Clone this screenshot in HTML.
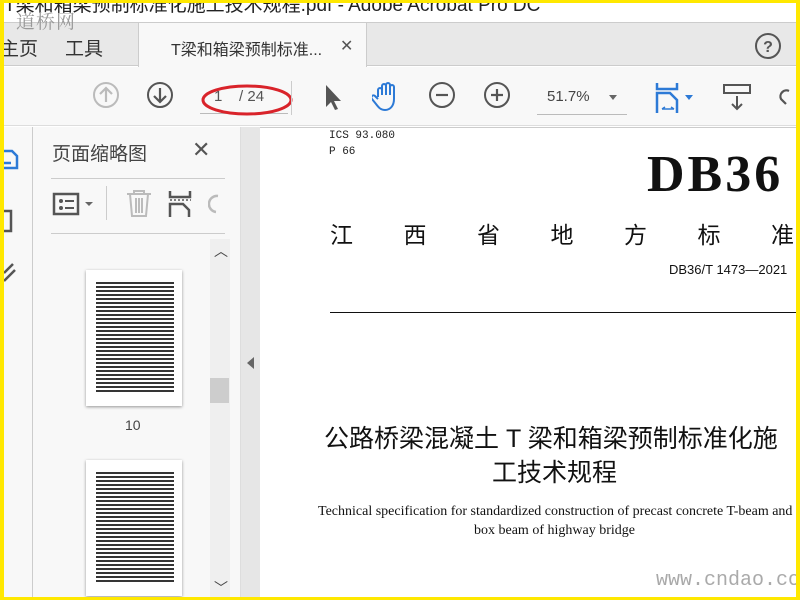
<!DOCTYPE html>
<html><head><meta charset="utf-8"><style>
*{margin:0;padding:0;box-sizing:border-box}
body{width:800px;height:600px;overflow:hidden;background:#ffe800;position:relative;font-family:"Liberation Sans","Noto Sans CJK SC",sans-serif}
.a{position:absolute}
.t{white-space:nowrap}
.lines{position:absolute;left:10px;right:8px;top:12px;bottom:12px;background:repeating-linear-gradient(#111 0 2px,#fff 2px 4px);opacity:.85}
</style></head><body>
<div class="a" style="left:4px;top:3px;width:792px;height:594px;background:#fff;overflow:hidden">
 <!-- title -->
 <div class="a t" style="left:0;top:-13px;font-size:19px;color:#222">T梁和箱梁预制标准化施工技术规程.pdf - Adobe Acrobat Pro DC</div>
 <!-- tabs -->
 <div class="a" style="left:0;top:19px;width:792px;height:44px;background:#e8e8e8;border-top:1px solid #ccc;border-bottom:1px solid #ccc"></div>
 <div class="a" style="left:134px;top:19px;width:229px;height:45px;background:#f8f8f8;border-left:1px solid #ccc;border-right:1px solid #ccc;border-top:1px solid #ccc"></div>
 <div class="a t" style="left:12px;top:4px;font-size:19px;color:#999;font-family:'Noto Serif CJK SC',serif;letter-spacing:1px;z-index:2">道桥网</div>
 <div class="a t" style="left:-4px;top:31px;font-size:19px;color:#333">主页</div>
 <div class="a t" style="left:61px;top:31px;font-size:19px;color:#333">工具</div>
 <div class="a t" style="left:167px;top:33px;font-size:16px;color:#333">T梁和箱梁预制标准...</div>
 <div class="a t" style="left:336px;top:33px;font-size:16px;color:#555">✕</div>
 <svg class="a" style="left:750px;top:29px" width="28" height="28"><circle cx="14" cy="14" r="12" fill="none" stroke="#555" stroke-width="2"/><text x="14" y="20" font-size="16" font-weight="bold" text-anchor="middle" fill="#555" font-family="Liberation Sans">?</text></svg>
 <!-- toolbar -->
 <div class="a" style="left:0;top:64px;width:792px;height:59px;background:#f8f8f8;border-bottom:1px solid #ddd"></div>
 <svg class="a" style="left:88px;top:78px" width="28" height="28"><circle cx="14" cy="14" r="12" fill="none" stroke="#bbb" stroke-width="2"/><path d="M14 21V7M8 13l6-6 6 6" fill="none" stroke="#bbb" stroke-width="2.2"/></svg>
 <svg class="a" style="left:142px;top:78px" width="28" height="28"><circle cx="14" cy="14" r="12" fill="none" stroke="#555" stroke-width="2"/><path d="M14 7v14M8 15l6 6 6-6" fill="none" stroke="#555" stroke-width="2.2"/></svg>
 <div class="a" style="left:196px;top:110px;width:88px;height:1px;background:#bbb"></div>
 <div class="a t" style="left:210px;top:85px;font-size:15px;color:#555">1 &nbsp;&nbsp;&nbsp;/ 24</div>
 <svg class="a" style="left:196px;top:78px" width="94" height="38"><ellipse cx="47" cy="19" rx="44" ry="14" fill="none" stroke="#d9232a" stroke-width="3"/></svg>
 <div class="a" style="left:287px;top:78px;width:1px;height:34px;background:#ccc"></div>
 <svg class="a" style="left:318px;top:80px" width="22" height="28"><path d="M4 2v22l5-5 4 8 3-1-4-8h7z" fill="#555"/></svg>
 <svg class="a" style="left:368px;top:78px" width="30" height="32"><path d="M6 16V9a2 2 0 014 0v5V5a2 2 0 014 0v9V4a2 2 0 014 0v10V6a2 2 0 014 0v12c0 7-4 11-9 11-4 0-6-2-9-6l-4-5a2 2 0 013-3l3 3" fill="none" stroke="#2d7ad6" stroke-width="2"/></svg>
 <svg class="a" style="left:424px;top:78px" width="28" height="28"><circle cx="14" cy="14" r="12" fill="none" stroke="#555" stroke-width="2"/><path d="M8 14h12" stroke="#555" stroke-width="2.2"/></svg>
 <svg class="a" style="left:479px;top:78px" width="28" height="28"><circle cx="14" cy="14" r="12" fill="none" stroke="#555" stroke-width="2"/><path d="M8 14h12M14 8v12" stroke="#555" stroke-width="2.2"/></svg>
 <div class="a" style="left:533px;top:111px;width:90px;height:1px;background:#bbb"></div>
 <div class="a t" style="left:543px;top:85px;font-size:15px;color:#444">51.7%</div>
 <div class="a" style="left:605px;top:92px;border:4px solid transparent;border-top:5px solid #666"></div>
 <svg class="a" style="left:650px;top:78px" width="46" height="34"><path d="M3 2v6h20V2" fill="none" stroke="#2d7ad6" stroke-width="2.5"/><path d="M3 32V12h13l7 7v13" fill="none" stroke="#2d7ad6" stroke-width="2.5"/><path d="M8 28h12M8 28l3-2M20 28l-3-2" stroke="#2d7ad6" stroke-width="1.5"/><path d="M31 14h8l-4 5z" fill="#2d7ad6"/></svg>
 <svg class="a" style="left:718px;top:80px" width="32" height="30"><rect x="2" y="2" width="26" height="8" fill="none" stroke="#555" stroke-width="2"/><path d="M15 13v13M10 21l5 5 5-5" fill="none" stroke="#555" stroke-width="2"/></svg>
 <svg class="a" style="left:775px;top:84px" width="20" height="24"><path d="M10 4a6 6 0 00-8 8l5 5" fill="none" stroke="#555" stroke-width="2.2"/></svg>
 <!-- left rail -->
 <div class="a" style="left:0;top:124px;width:29px;height:470px;background:#f8f8f8;border-right:1px solid #ccc"></div>
 <svg class="a" style="left:0;top:140px" width="36" height="160"><path d="M0 8h8l5 5v12H0M0 20h7" fill="none" stroke="#2d7ad6" stroke-width="2.5"/><path d="M0 68h7v20H0" fill="none" stroke="#555" stroke-width="2.5"/><path d="M0 130l9-9M0 138l11-11" fill="none" stroke="#555" stroke-width="2.5"/></svg>
 <!-- panel -->
 <div class="a" style="left:29px;top:124px;width:208px;height:470px;background:#f8f8f8;border-right:1px solid #ddd"></div>
 <div class="a t" style="left:48px;top:136px;font-size:19px;color:#444">页面缩略图</div>
 <div class="a t" style="left:188px;top:134px;font-size:22px;color:#555">✕</div>
 <div class="a" style="left:47px;top:175px;width:174px;height:1px;background:#ccc"></div>
 <div class="a" style="left:47px;top:230px;width:174px;height:1px;background:#ccc"></div>
 <svg class="a" style="left:48px;top:188px" width="50" height="26"><rect x="2" y="3" width="24" height="20" fill="none" stroke="#555" stroke-width="2.5"/><circle cx="9" cy="10" r="2" fill="#555"/><circle cx="9" cy="17" r="2" fill="#555"/><path d="M13 10h9M13 17h9" stroke="#555" stroke-width="2"/><path d="M33 11h8l-4 4z" fill="#666"/></svg>
 <div class="a" style="left:102px;top:183px;width:1px;height:34px;background:#ccc"></div>
 <svg class="a" style="left:120px;top:185px" width="30" height="30"><path d="M3 6h24M10 6V3h10v3M6 6l2 22h14l2-22M12 10v15M15 10v15M18 10v15" fill="none" stroke="#bbb" stroke-width="2"/></svg>
 <svg class="a" style="left:164px;top:186px" width="26" height="30"><path d="M2 2v6h20V2M2 28V15h13l6 6v7" fill="none" stroke="#555" stroke-width="2.5"/><path d="M2 11h21" stroke="#555" stroke-dasharray="2 2" stroke-width="1.5"/></svg>
 <svg class="a" style="left:204px;top:190px" width="12" height="26"><path d="M10 3a8 8 0 00-2 16" fill="none" stroke="#bbb" stroke-width="2.5"/></svg>
 <!-- scrollbar -->
 <div class="a" style="left:206px;top:236px;width:20px;height:358px;background:#efefef"></div>
 <div class="a" style="left:206px;top:375px;width:19px;height:25px;background:#cdcdcd"></div>
 <div class="a t" style="left:210px;top:238px;font-size:14px;color:#444">︿</div>
 <div class="a t" style="left:210px;top:575px;font-size:14px;color:#444">﹀</div>
 <div class="a" style="left:82px;top:267px;width:96px;height:136px;background:#fff;box-shadow:0 1px 3px rgba(0,0,0,.4)"><div class="lines"></div></div>
 <div class="a t" style="left:121px;top:414px;font-size:14px;color:#444">10</div>
 <div class="a" style="left:82px;top:457px;width:96px;height:136px;background:#fff;box-shadow:0 1px 3px rgba(0,0,0,.4)"><div class="lines"></div></div>
 <!-- divider -->
 <div class="a" style="left:237px;top:124px;width:23px;height:470px;background:#e6e6e6"></div>
 <div class="a" style="left:243px;top:354px;border:6px solid transparent;border-right:7px solid #666;border-left:0"></div>
 <!-- document -->
 <div class="a" style="left:256px;top:124px;width:536px;height:470px;background:#fff;border-top:1px solid #ccc"></div>
 <div class="a t" style="left:325px;top:127px;font-size:11px;color:#222;font-family:'Liberation Mono',monospace">ICS 93.080</div>
 <div class="a t" style="left:325px;top:143px;font-size:11px;color:#222;font-family:'Liberation Mono',monospace">P 66</div>
 <div class="a t" style="left:643px;top:142px;font-size:52px;font-weight:bold;font-family:'Liberation Serif',serif;color:#111;letter-spacing:3px">DB36</div>
 <div class="a t" style="left:326px;top:213px;font-size:23px;color:#111;letter-spacing:50.5px">江西省地方标准</div>
 <div class="a t" style="left:665px;top:259px;font-size:13px;color:#111">DB36/T 1473—2021</div>
 <div class="a" style="left:326px;top:309px;width:470px;height:1px;background:#111"></div>
 <div class="a t" style="left:320px;top:416px;font-size:25px;color:#111">公路桥梁混凝土 T 梁和箱梁预制标准化施</div>
 <div class="a t" style="left:488px;top:450px;font-size:25px;color:#111">工技术规程</div>
 <div class="a t" style="left:314px;top:501px;font-size:14px;color:#111;font-family:'Liberation Serif',serif">Technical specification for standardized construction of precast concrete T-beam and</div>
 <div class="a t" style="left:470px;top:520px;font-size:14px;color:#111;font-family:'Liberation Serif',serif">box beam of highway bridge</div>
 <div class="a t" style="left:652px;top:566px;font-size:20px;color:#aaa;font-family:'Liberation Mono',monospace">www.cndao.com</div>
</div>
</body></html>
